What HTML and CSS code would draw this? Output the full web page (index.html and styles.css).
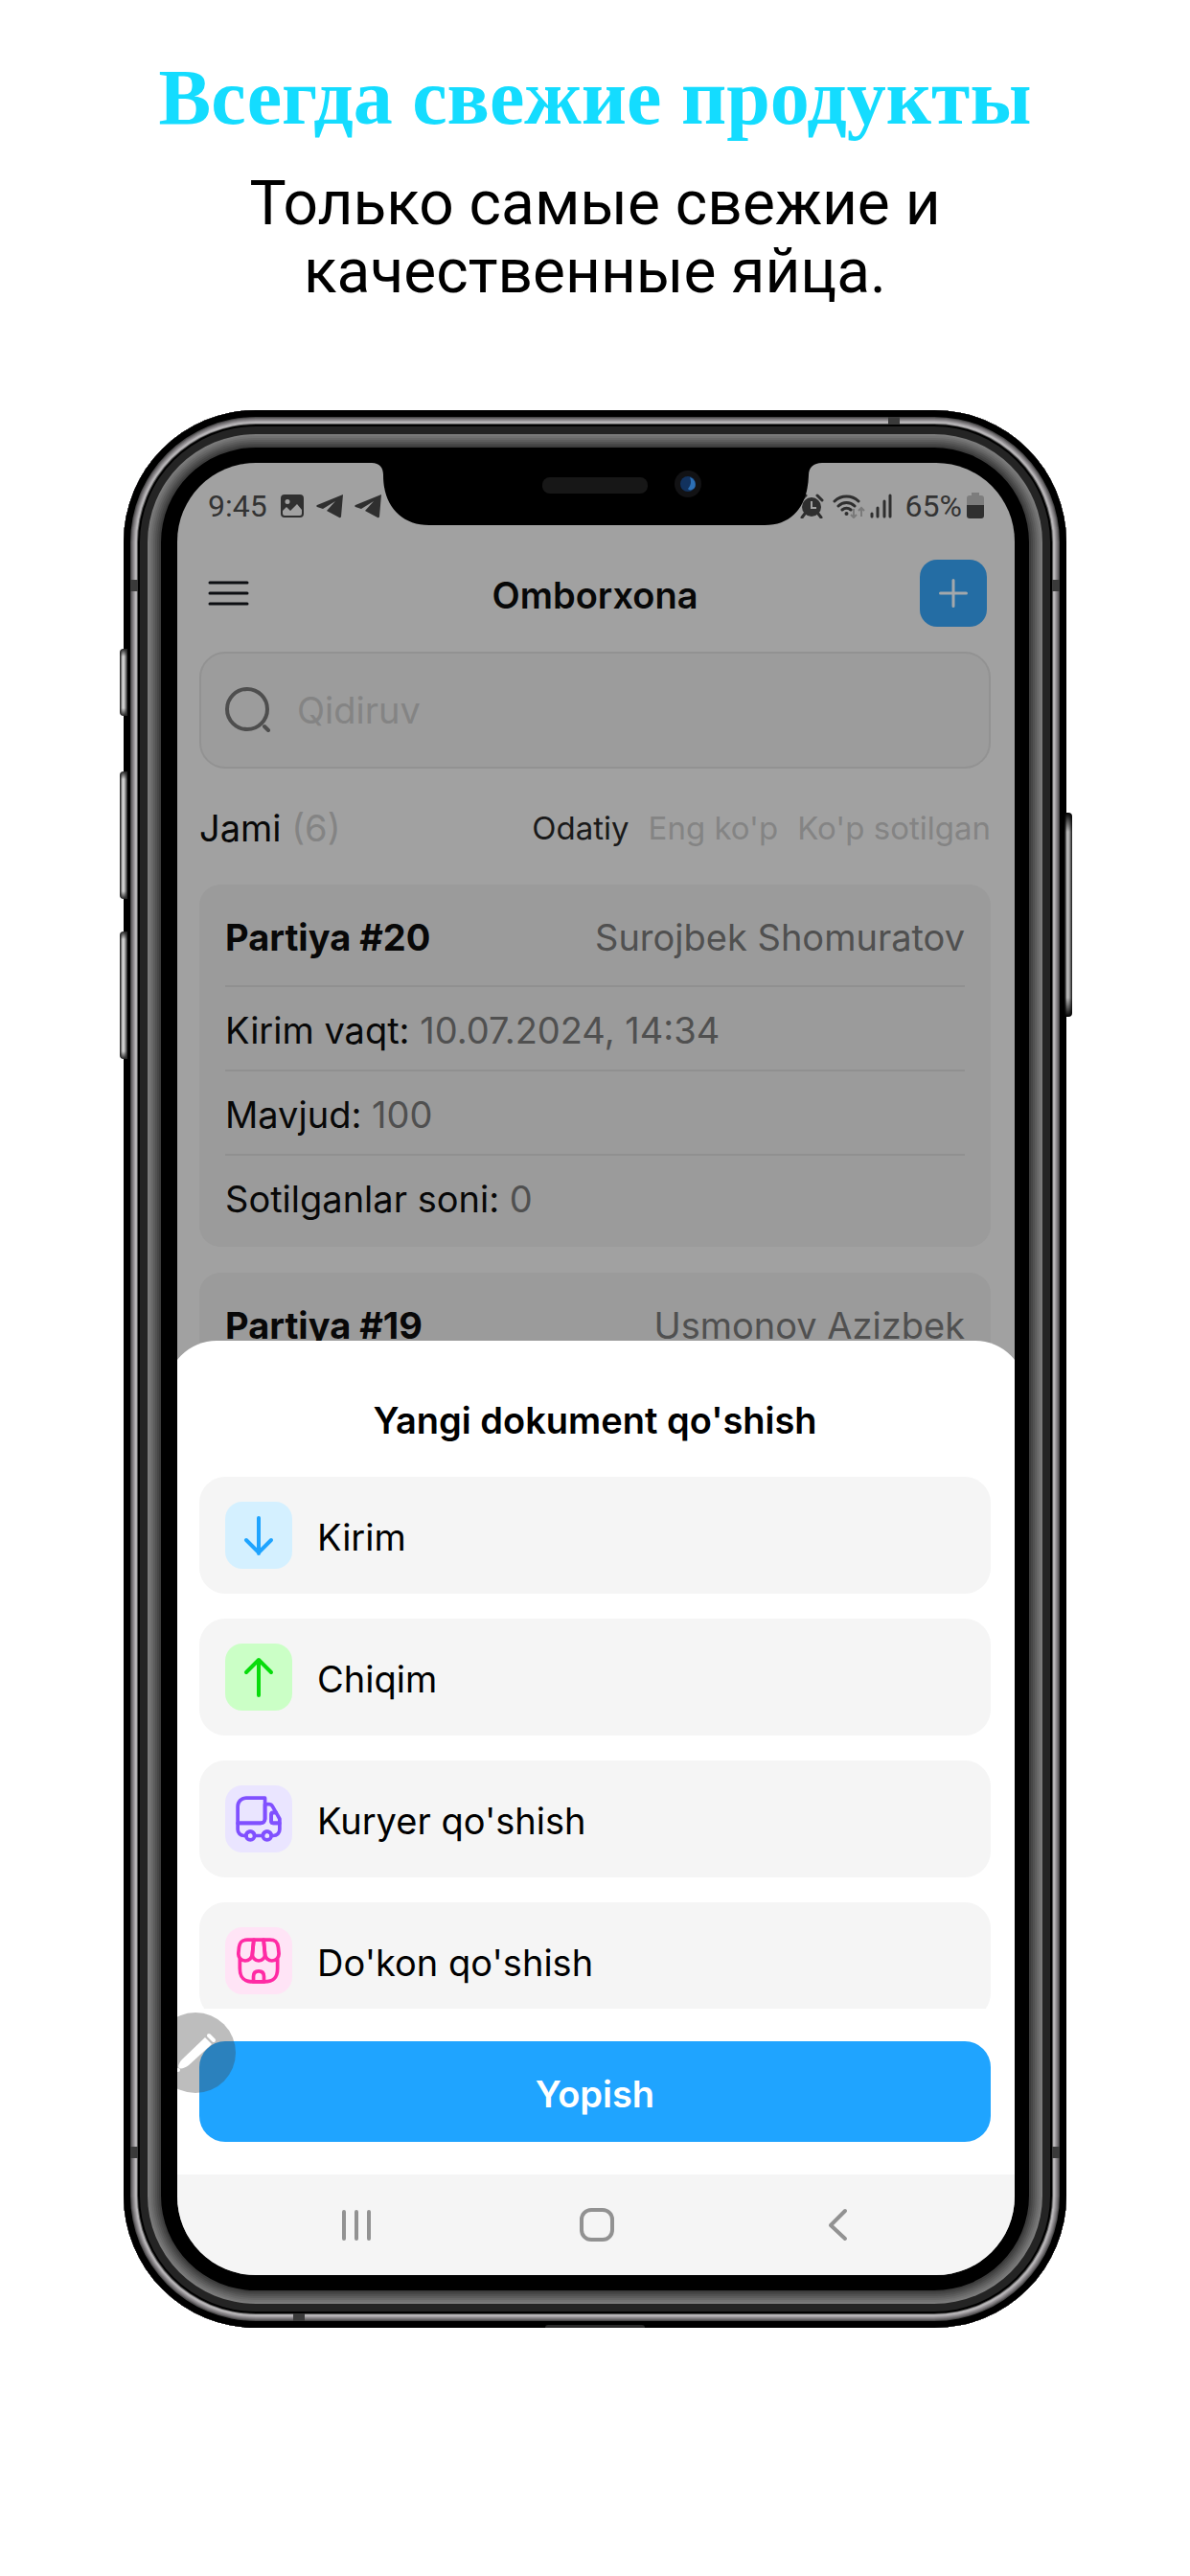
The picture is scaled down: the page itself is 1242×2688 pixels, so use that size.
FILE: index.html
```
<!DOCTYPE html>
<html lang="uz">
<head>
<meta charset="utf-8">
<meta name="viewport" content="width=device-width, initial-scale=1">
<title>Omborxona</title>
<link rel="stylesheet" href="styles.css">
</head>
<body>
<header class="promo" lang="ru">
  <h1 class="promo-title">Всегда свежие продукты</h1>
  <p class="promo-text">Только самые свежие и качественные яйца.</p>
</header>

<div class="phone">
  <span class="key key-mute"></span>
  <span class="key key-up"></span>
  <span class="key key-down"></span>
  <span class="key key-power"></span>
  <span class="band band-left band-high"></span>
  <span class="band band-right band-high"></span>
  <span class="band band-left band-low"></span>
  <span class="band band-right band-low"></span>
  <span class="band band-top"></span>
  <span class="band band-bottom"></span>
  <span class="port"></span>

  <div class="screen">
    <svg class="notch" viewBox="0 0 470 66" aria-hidden="true">
      <path d="M0 0C8 0 12 5 12 13C12 44 30 65 60 65H410C440 65 455 44 456 13C456 5 461 0 470 0Z" fill="#000"/>
      <rect x="178" y="15" width="110" height="17" rx="8" fill="#171717"/>
      <circle cx="330" cy="22" r="14" fill="#121214"/>
      <circle cx="330" cy="22" r="8" fill="#12325e"/>
      <path d="M332 15a8 8 0 0 1 5 11c-3 3-6 3-7 1c3-4 4-7 2-12z" fill="#2c6fb4"/>
    </svg>

    <div class="status">
      <div class="status-side">
        <span>9:45</span>
        <svg class="status-image" width="24" height="24" viewBox="0 0 24 24"><path fill-rule="evenodd" d="M4 0h16a4 4 0 0 1 4 4v16a4 4 0 0 1-4 4H4a4 4 0 0 1-4-4V4a4 4 0 0 1 4-4zM2 17v3a2 2 0 0 0 2 2h16a2 2 0 0 0 2-2v-4l-5-6-7 7-4-4zM7 5a2.500 2.500 0 1 0 0 5a2.500 2.500 0 0 0 0-5z" fill="#2f2f2f"/></svg>
        <svg width="29" height="26" viewBox="0 0 29 26"><path d="M28 1L1 12c-1 .5-1 1.500 0 2l6 2L20 8 11 18l13 7c1 .5 2 0 2-1z" fill="#2f2f2f"/></svg>
        <svg width="29" height="26" viewBox="0 0 29 26"><path d="M28 1L1 12c-1 .5-1 1.500 0 2l6 2L20 8 11 18l13 7c1 .5 2 0 2-1z" fill="#2f2f2f"/></svg>
      </div>
      <div class="status-side status-right">
        <svg width="26" height="26" viewBox="0 0 26 26"><circle cx="13" cy="14" r="10" fill="#2f2f2f"/><path d="M6 21l-3 4M20 21l3 4M19 2l5 5M7 2L2 7" stroke="#2f2f2f" stroke-width="3" stroke-linecap="round"/><path d="M13 8v7h5" fill="none" stroke="#a1a1a1" stroke-width="2"/></svg>
        <svg class="status-wifi" width="34" height="26" viewBox="0 0 34 26"><g fill="none" stroke="#2f2f2f" stroke-width="3" stroke-linecap="round"><path d="M2 8a18 18 0 0 1 25 0M6 13a12 12 0 0 1 17 0M10 17a7 7 0 0 1 9 0"/></g><circle cx="14.500" cy="21" r="2" fill="#2f2f2f"/><path d="M22 16v9m-3-3l3 3 3-3M30 24v-9m-3 3l3-3 3 3" fill="none" stroke="#7a7a7a" stroke-width="2"/></svg>
        <svg class="status-signal" width="24" height="26" viewBox="0 0 24 26"><path d="M2 21v3M8 15v9M15 8v16M21 2v22" stroke="#2f2f2f" stroke-width="3" stroke-linecap="round"/></svg>
        <span>65%</span>
        <svg width="18" height="28" viewBox="0 0 18 28"><path d="M5 0h8v3h2a3 3 0 0 1 3 3v7H0V6a3 3 0 0 1 3-3h2z" fill="#7d7d7d"/><path d="M0 13h18v11a3 3 0 0 1-3 3H3a3 3 0 0 1-3-3z" fill="#2f2f2f"/></svg>
      </div>
    </div>

    <main class="page">
      <div class="topbar">
        <button class="menu-button" type="button" aria-label="Menyu">
          <svg width="43" height="26" viewBox="0 0 43 26"><path d="M2 2h39M2 13h39M2 24h39" stroke="#0c0e12" stroke-width="3" stroke-linecap="round"/></svg>
        </button>
        <h2 class="heading">Omborxona</h2>
        <button class="add-button" type="button" aria-label="Qo'shish">
          <svg width="30" height="30" viewBox="0 0 30 30"><path d="M15 1.500v27M1.500 15h27" stroke="#a4a8ab" stroke-width="3" stroke-linecap="round"/></svg>
        </button>
      </div>

      <label class="search">
        <svg width="50" height="50" viewBox="0 0 50 50" aria-hidden="true"><circle cx="24" cy="24" r="21" fill="none" stroke="#4e4e4e" stroke-width="4"/><path d="M42 42l4 4" stroke="#4e4e4e" stroke-width="4" stroke-linecap="round"/></svg>
        <input class="search-input" type="text" placeholder="Qidiruv" aria-label="Qidiruv">
      </label>

      <div class="filters">
        <p class="total">Jami <span class="faint">(6)</span></p>
        <div class="tabs">
          <button class="tab tab-active" type="button">Odatiy</button>
          <button class="tab" type="button">Eng ko'p</button>
          <button class="tab" type="button">Ko'p sotilgan</button>
        </div>
      </div>

      <article class="card">
        <header class="card-head"><h3 class="card-title">Partiya #20</h3><span class="muted">Surojbek Shomuratov</span></header>
        <p class="card-row">Kirim vaqt: <span class="muted">10.07.2024, 14:34</span></p>
        <p class="card-row">Mavjud: <span class="muted">100</span></p>
        <p class="card-row">Sotilganlar soni: <span class="muted">0</span></p>
      </article>
      <article class="card card-next">
        <header class="card-head"><h3 class="card-title">Partiya #19</h3><span class="muted">Usmonov Azizbek</span></header>
      </article>
    </main>

    <section class="sheet">
      <h2 class="heading">Yangi dokument qo'shish</h2>
      <div class="actions">
        <button class="action" type="button">
          <svg class="tile tile-blue" viewBox="0 0 70 70"><path d="M35 17v37M22 40l13 13 13-13"/></svg>
          <span class="action-label">Kirim</span>
        </button>
        <button class="action" type="button">
          <svg class="tile tile-green" viewBox="0 0 70 70"><path d="M35 54V17M22 30l13-13 13 13"/></svg>
          <span class="action-label">Chiqim</span>
        </button>
        <button class="action" type="button">
          <svg class="tile tile-violet" viewBox="-4 -4 32 32"><path d="M15 2v10c0 1.100-.9 2-2 2H2V6c0-2.210 1.790-4 4-4h9z"/><path d="M22 14v3c0 1.660-1.340 3-3 3h-1c0-1.100-.9-2-2-2s-2 .9-2 2h-4c0-1.100-.9-2-2-2s-2 .9-2 2H5c-1.660 0-3-1.340-3-3v-3h11c1.100 0 2-.9 2-2V5h1.840c.72 0 1.380.39 1.740 1.010L20.290 9H19c-.55 0-1 .45-1 1v3c0 .55.45 1 1 1h3z"/><circle cx="8" cy="20" r="2"/><circle cx="16" cy="20" r="2"/><path d="M22 12v2h-3c-.55 0-1-.45-1-1v-3c0-.55.45-1 1-1h1.290L22 12z"/></svg>
          <span class="action-label">Kuryer qo'shish</span>
        </button>
        <button class="action" type="button">
          <svg class="tile tile-pink" viewBox="-4 -4 32 32"><path d="M3.010 11.220v4.490C3.010 20.200 4.810 22 9.300 22h5.390c4.490 0 6.290-1.800 6.290-6.290v-4.490"/><path d="M12 12c1.830 0 3.180-1.490 3-3.320L14.340 2H9.670L9 8.680C8.820 10.510 10.170 12 12 12z"/><path d="M18.310 12c2.020 0 3.500-1.640 3.300-3.650l-.28-2.750C20.970 3 19.970 2 17.350 2H14.300l.7 7.010c.17 1.650 1.660 2.990 3.310 2.990zM5.640 12c1.650 0 3.140-1.340 3.300-2.990l.22-2.210L9.640 2H6.590C3.970 2 2.970 3 2.610 5.600l-.27 2.750C2.140 10.360 3.620 12 5.640 12zM12 17c-1.670 0-2.500.83-2.500 2.500V22h5v-2.500c0-1.670-.83-2.500-2.500-2.500z"/></svg>
          <span class="action-label">Do'kon qo'shish</span>
        </button>
      </div>
      <button class="close-button" type="button">Yopish</button>
    </section>

    <nav class="navbar">
      <button type="button" aria-label="Oxirgi ilovalar"><svg width="36" height="36" viewBox="0 0 36 36"><path d="M5 4v28M18 4v28M31 4v28"/></svg></button>
      <button type="button" aria-label="Bosh ekran"><svg width="36" height="36" viewBox="0 0 36 36"><rect x="2" y="2" width="32" height="31" rx="10"/></svg></button>
      <button type="button" aria-label="Orqaga"><svg width="36" height="36" viewBox="0 0 36 36"><path d="M26 3L11 18l15 14"/></svg></button>
    </nav>

    <button class="pen" type="button" aria-label="Qalam">
      <svg width="84" height="84" viewBox="0 0 84 84"><path d="M52 26l7 7-24 22c-4 3-8 4-10 3s0-6 3-9z" fill="#fff"/><path d="M56 24l5 5" stroke="#fff" stroke-width="4" stroke-linecap="round"/><circle cx="24" cy="60" r="2" fill="#fff"/></svg>
    </button>
  </div>
</div>
</body>
</html>
```
FILE: styles.css
```
* {
  box-sizing: border-box;
}

body {
  margin: 0;
  min-height: 100vh;
  padding: 55px 24px 80px;
  background: #fff;
  color: #000;
  font-family: Inter, "Noto Sans", sans-serif;
}

h1, h2, h3, p {
  margin: 0;
}

button {
  margin: 0;
  padding: 0;
  border: 0;
  background: none;
  color: inherit;
  font: inherit;
}

svg {
  display: block;
  flex: none;
}

/* Promo text */
.promo {
  display: grid;
  gap: 28px;
  justify-items: center;
  text-align: center;
}

.promo-title {
  color: #14dcff;
  font: bold 82px/94px "Liberation Serif", serif;
}

.promo-text {
  max-width: 800px;
  font: 64px/71px Roboto, sans-serif;
}

/* Phone body: each ring of the casing is one inset shadow */
.phone {
  position: relative;
  max-width: 984px;
  margin: 109px auto 0;
  padding: 55px 54px 55px 56px;
  border-radius: 138px;
  background: #000;
  box-shadow:
    inset 0 0 0 7px #000,
    inset 0 0 0 8px #4a494a,
    inset 0 0 0 9px #666466,
    inset 0 0 0 10px #7b787b,
    inset 0 0 0 11px #8f8c8f,
    inset 0 0 0 12px #a5a2a5,
    inset 0 0 0 13px #b9b7b9,
    inset 0 0 0 14px #b0aeb0,
    inset 0 0 0 15px #555,
    inset 0 0 0 17px #000,
    inset 0 0 0 25px #242424,
    inset 0 0 0 27px #7a7a7a,
    inset 0 0 0 29px #727272,
    inset 0 0 0 31px #686868,
    inset 0 0 0 33px #5d5d5d,
    inset 0 0 0 35px #525252,
    inset 0 0 0 37px #474747,
    inset 0 0 0 39px #3c3c3c;
}

.key {
  position: absolute;
  left: -4px;
  width: 8px;
  border-radius: 4px 0 0 4px;
  background: linear-gradient(#222, transparent 8px calc(100% - 8px), #222), linear-gradient(90deg, #333 1px, #aaa 2px, #ddd 4px, #888 6px, #222);
}

.key-mute { top: 249px; height: 70px; }
.key-up { top: 377px; height: 133px; }
.key-down { top: 544px; height: 133px; }

.key-power {
  top: 420px;
  right: -6px;
  left: auto;
  height: 213px;
  border-radius: 0 4px 4px 0;
  background: linear-gradient(#000, transparent 20px calc(100% - 20px), #000), linear-gradient(90deg, #222 1px, #aaa 2px, #bbb 4px, #777 6px, #111);
}

.band {
  position: absolute;
  width: 8px;
  height: 12px;
  background: #3a3a3a;
}

.band-left { left: 7px; }
.band-right { right: 7px; }
.band-high { top: 177px; }
.band-low { bottom: 177px; }
.band-top { top: 7px; right: 174px; width: 12px; height: 8px; }
.band-bottom { bottom: 7px; left: 177px; width: 12px; height: 8px; }

.port {
  position: absolute;
  bottom: 0;
  left: 50%;
  width: 104px;
  height: 3px;
  margin-left: -52px;
  border-radius: 3px 3px 0 0;
  background: #2a2a2a;
}

.screen {
  position: relative;
  overflow: hidden;
  border-radius: 82px;
  background: #a1a1a1;
}

.notch {
  position: absolute;
  top: 0;
  left: 50%;
  width: 470px;
  height: 66px;
  margin-left: -234px;
}

/* Status bar */
.status {
  display: flex;
  justify-content: space-between;
  height: 90px;
  padding: 0 32px;
  color: #333;
  font: 32px/90px Roboto, sans-serif;
}

.status-side {
  display: flex;
  align-items: center;
  gap: 11px;
}

.status-image {
  margin: 0 2px 0 3px;
}

.status-right {
  gap: 5px;
}

.status-wifi {
  margin-left: 4px;
}

.status-signal {
  margin-right: 8px;
}

/* Dimmed page */
.page {
  padding: 0 25px 0 23px;
  color: #080808;
  font-size: 38px;
  line-height: 50px;
}

.topbar {
  display: grid;
  grid-template-columns: 70px 1fr 70px;
  align-items: center;
  height: 92px;
  padding: 0 4px;
}

.menu-button {
  padding-left: 5px;
}

.heading {
  padding-top: 4px;
  font-size: 38px;
  font-weight: 600;
  line-height: 50px;
  text-align: center;
}

.add-button {
  display: grid;
  place-items: center;
  width: 70px;
  height: 70px;
  border-radius: 18px;
  background: #246da4;
}

.search {
  display: flex;
  align-items: center;
  gap: 26px;
  height: 122px;
  margin-top: 15px;
  padding: 0 24px;
  border: 2px solid #929292;
  border-radius: 27px;
  background: #9c9c9c;
}

.search-input {
  flex: 1;
  min-width: 0;
  padding: 0;
  border: 0;
  outline: 0;
  background: none;
  color: inherit;
  font: inherit;
}

.search-input::placeholder {
  color: #848484;
  opacity: 1;
}

.filters {
  display: flex;
  align-items: center;
  justify-content: space-between;
  height: 121px;
  padding-top: 2px;
}

.faint {
  color: #848484;
}

.muted {
  color: #505050;
}

.tabs {
  display: flex;
  gap: 20px;
}

.tab {
  color: #848484;
  font-size: 33px;
}

.tab-active {
  color: #1a1a1a;
}

.card {
  padding: 0 27px;
  border-radius: 22px;
  background: #9b9b9b;
}

.card-next {
  margin-top: 27px;
}

.card-head {
  display: flex;
  align-items: center;
  justify-content: space-between;
  height: 105px;
  padding-top: 4px;
}

.card-title {
  font-size: 38px;
  font-weight: 700;
}

.card-row {
  padding: 20px 0 16px;
  border-top: 2px solid #909090;
}

.card-row:last-child {
  padding-bottom: 25px;
}

/* Bottom sheet: a little wider than the screen, so its corners are cut off */
.sheet {
  position: relative;
  display: grid;
  gap: 34px;
  margin: -34px -11px 0;
  padding: 54px 36px 34px 34px;
  border-radius: 52px 52px 0 0;
  background: #fff;
  font-size: 38px;
}

.actions {
  display: grid;
  gap: 26px;
  align-content: start;
  max-height: 555px;
  overflow: hidden;
}

.action {
  display: flex;
  align-items: center;
  gap: 26px;
  height: 122px;
  padding: 0 27px;
  border-radius: 27px;
  background: #f5f5f5;
  text-align: left;
}

.action-label {
  padding-top: 4px;
}

.tile {
  width: 70px;
  height: 70px;
  border-radius: 18px;
  fill: none;
  stroke-width: 4;
  stroke-linecap: round;
  stroke-linejoin: round;
}

.tile-blue { background: #d4f0ff; stroke: #1fa4ff; }
.tile-green { background: #cbffc6; stroke: #08dc0c; }
.tile-violet { background: #eae5ff; stroke: #8050ff; stroke-width: 1.7; }
.tile-pink { background: #ffe4f6; stroke: #ff2ba4; stroke-width: 1.7; }

.close-button {
  height: 105px;
  padding-top: 4px;
  border-radius: 27px;
  background: #1fa4ff;
  color: #fff;
  font-weight: 600;
}

/* System navigation */
.navbar {
  display: flex;
  align-items: center;
  justify-content: space-around;
  height: 105px;
  padding: 0 60px 0 62px;
  background: #f5f5f5;
}

.navbar svg {
  fill: none;
  stroke: #929292;
  stroke-width: 4;
  stroke-linecap: round;
  stroke-linejoin: round;
}

.pen {
  position: absolute;
  bottom: 190px;
  left: -23px;
  border-radius: 50%;
  background: rgba(66, 66, 66, .35);
}
```
